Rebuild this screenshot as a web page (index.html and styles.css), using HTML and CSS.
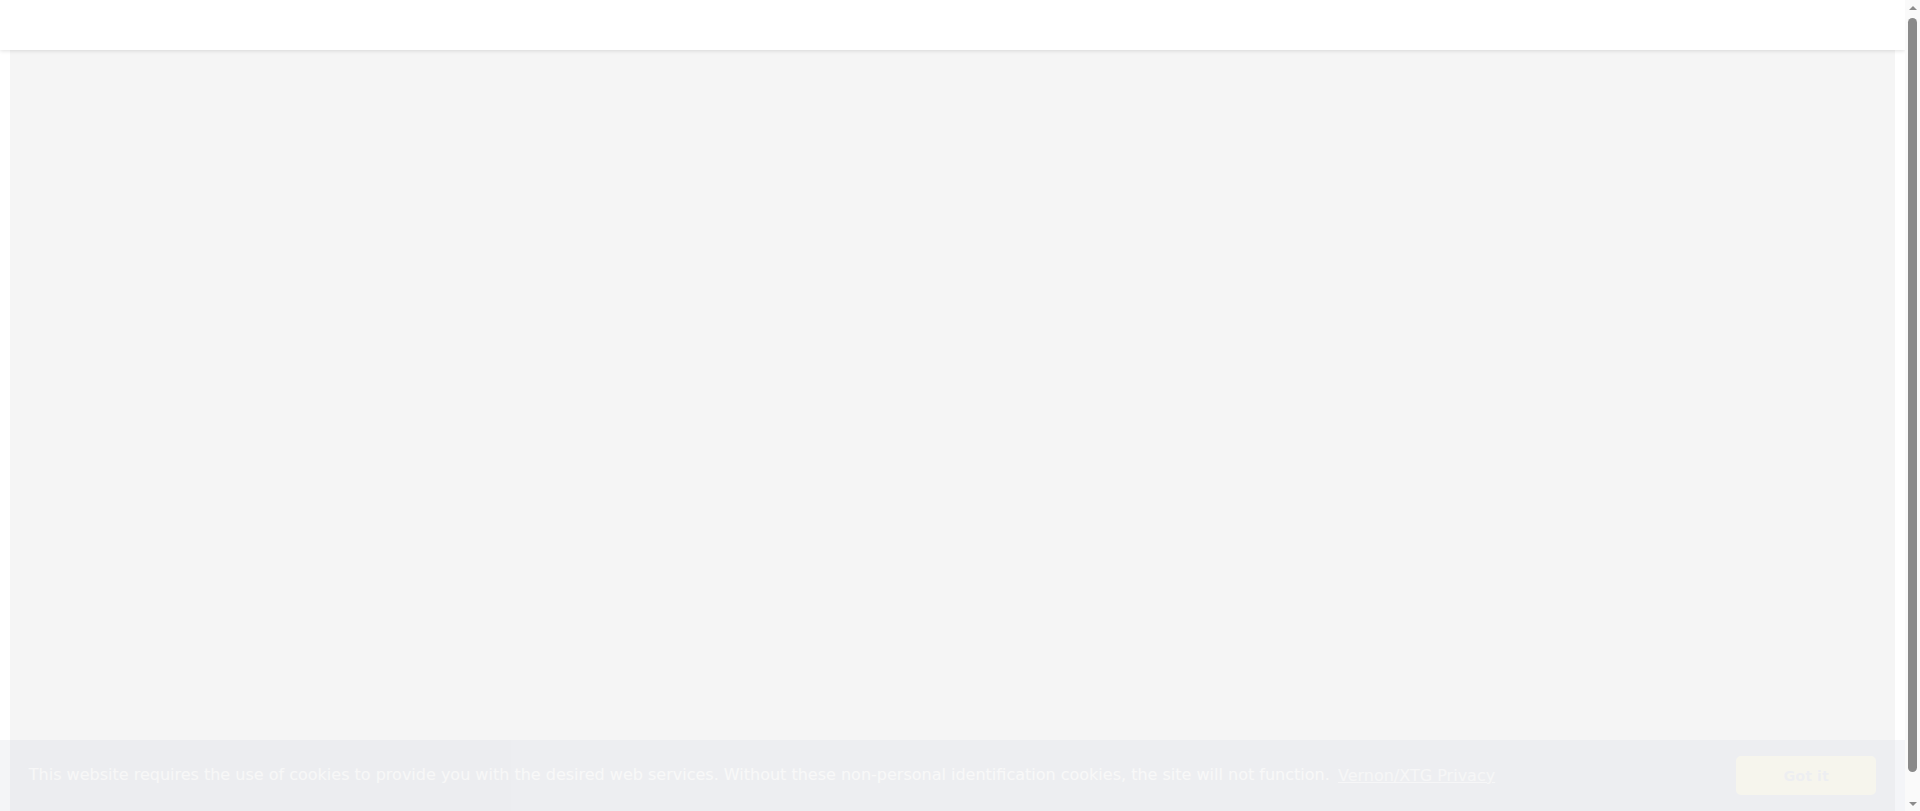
FILE: index.html
```html
<!DOCTYPE html>
<html lang="en">
<head>
    <meta charset="UTF-8">
    <meta name="viewport" content="width=device-width, initial-scale=1.0">
    <title>Vernon/XTG</title>
    <link rel="stylesheet" href="styles.css">
</head>
<body>
    <div class="page">
        <header class="topbar"></header>
        <main class="content"></main>
    </div>

    <!-- Barra de desplazamiento -->
    <div class="scrollbar" aria-hidden="true">
        <span class="scroll-arrow"><span class="arrow-up"></span></span>
        <div class="scroll-track">
            <div class="scroll-thumb"></div>
        </div>
        <span class="scroll-arrow"><span class="arrow-down"></span></span>
    </div>

    <!-- Aviso de cookies (apareciendo) -->
    <div class="cookie-banner" role="dialog" aria-label="cookieconsent">
        <span class="cookie-message">
            This website requires the use of cookies to provide you with the desired web services. Without these non-personal identification cookies, the site will not function.
            <a class="cookie-link" href="#">Vernon/XTG Privacy</a>
        </span>
        <div class="cookie-actions">
            <a class="cookie-btn" href="#">Got it</a>
        </div>
    </div>
</body>
</html>
```

FILE: styles.css
```css
/* Estilos generales */
html, body {
    margin: 0;
    padding: 0;
    height: 100%;
    overflow: hidden;
}

body {
    display: flex;
    font-family: "DejaVu Sans", sans-serif;
    background-color: #fff;
}

.page {
    flex: 1 1 auto;
    height: 100%;
    overflow: hidden;
    background-color: #fff;
}

.topbar {
    position: relative;
    z-index: 2;
    height: 50px;
    background-color: #fff;
    box-shadow: 0 1px 4px rgba(0, 0, 0, 0.12);
}

.content {
    margin: 0 10px;
    height: 790px;
    background-color: #f5f5f5;
}

/* Barra de desplazamiento */
.scrollbar {
    flex: 0 0 15px;
    display: flex;
    flex-direction: column;
    align-items: center;
    background-color: #fafafa;
}

.scroll-arrow {
    flex: 0 0 15px;
    width: 15px;
    display: flex;
    align-items: center;
    justify-content: center;
}

.arrow-up {
    width: 0;
    height: 0;
    border-left: 4px solid transparent;
    border-right: 4px solid transparent;
    border-bottom: 4px solid #8c8c8c;
}

.arrow-down {
    width: 0;
    height: 0;
    border-left: 4px solid transparent;
    border-right: 4px solid transparent;
    border-top: 4px solid #8c8c8c;
}

.scroll-track {
    flex: 1 1 auto;
    display: flex;
    justify-content: center;
}

.scroll-thumb {
    width: 9px;
    height: 754px;
    margin-top: 3px;
    border-radius: 5px;
    background-color: #8a8a8a;
}

/* Barra de cookies */
.cookie-banner {
    position: fixed;
    left: 0;
    right: 15px;
    bottom: 0;
    z-index: 10;
    display: flex;
    align-items: center;
    padding: 16px 28.8px;
    font-size: 16px;
    line-height: 24px;
    color: #fff;
    background-color: #d8dce4;
    opacity: 0.28;
    will-change: opacity;
}

.cookie-message {
    flex: 1 1 auto;
    margin-right: 16px;
}

.cookie-link {
    display: inline-block;
    padding: 3.2px;
    color: #fff;
    opacity: 0.8;
    text-decoration: underline;
}

.cookie-actions {
    display: flex;
}

.cookie-btn {
    display: block;
    box-sizing: border-box;
    min-width: 140px;
    padding: 6.5px 11.5px;
    font-size: 14.4px;
    line-height: 22px;
    font-weight: 700;
    text-align: center;
    text-decoration: none;
    color: #d8dce4;
    background-color: #f8f4d8;
    border: 2px solid #f8f4d8;
    border-radius: 5px;
}
```
